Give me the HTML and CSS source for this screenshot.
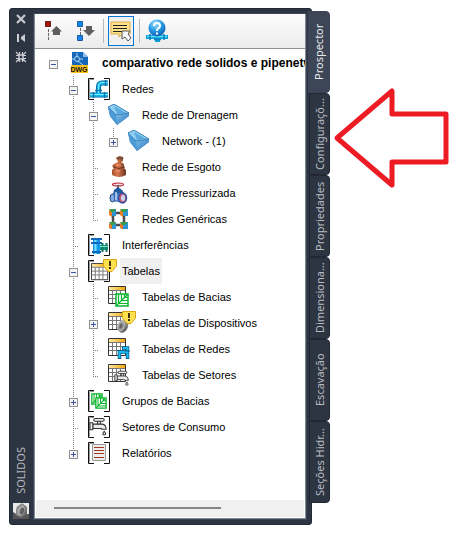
FILE: index.html
```html
<!DOCTYPE html>
<html lang="pt-BR">
<head>
    <meta charset="UTF-8">
    <meta name="viewport" content="width=device-width, initial-scale=1">
    <title>SOLIDOS</title>
    <link rel="stylesheet" href="styles.css">
</head>
<body>
    <!-- shared tree icons -->
    <svg class="symbols" width="0" height="0" aria-hidden="true">
        <defs>
            <linearGradient id="gem-light" x1="0" y1="0" x2="1" y2="1">
                <stop offset="0" stop-color="#7fc0ea"/>
                <stop offset="1" stop-color="#2a75bb"/>
            </linearGradient>
            <linearGradient id="gold" x1="0" y1="0" x2="1" y2="0">
                <stop offset="0" stop-color="#ffe9a0"/>
                <stop offset="1" stop-color="#f5a80c"/>
            </linearGradient>
            <linearGradient id="clay" x1="0" y1="0" x2="1" y2="0">
                <stop offset="0" stop-color="#a5502c"/>
                <stop offset=".4" stop-color="#d9774a"/>
                <stop offset="1" stop-color="#6b3423"/>
            </linearGradient>
            <radialGradient id="globe" cx=".4" cy=".25" r=".8">
                <stop offset="0" stop-color="#9fe4ff"/>
                <stop offset=".5" stop-color="#2a9be6"/>
                <stop offset="1" stop-color="#0759ab"/>
            </radialGradient>
            <linearGradient id="steel" x1="0" y1="0" x2="1" y2="1">
                <stop offset="0" stop-color="#d5d5d5"/>
                <stop offset=".5" stop-color="#8a8a8a"/>
                <stop offset="1" stop-color="#4c4c4c"/>
            </linearGradient>
        </defs>
        <symbol id="brackets" viewBox="0 0 22 22">
            <path d="M6 .5H.5V21.500H6M16 .5H21.500V21.500H16" fill="none" stroke="#111"/>
            <path d="M1.500 1.500V20.500M2 1.500H6" stroke="#999"/>
        </symbol>
        <symbol id="gem" viewBox="0 0 22 22">
            <path d="M0 3L6 0L21 9V12L9 21L2 12Z" fill="#2f7fc4"/>
            <path d="M0 3L6 0L21 9L8 11Z" fill="#8ecdf0"/>
            <path d="M6 2L9 10L18 9Z" fill="#5aa9de"/>
            <path d="M0 3L8 11L9 21L2 12Z" fill="#4d9bd6"/>
            <path d="M8 11L21 9V12L9 21Z" fill="url(#gem-light)"/>
            <path d="M0 3L6 0L21 9L8 11Z" fill="none" stroke="#2d77b5" stroke-width=".8"/>
        </symbol>
        <symbol id="table" viewBox="0 0 22 22">
            <path d="M.5 .5H17.500V17.500H.5Z" fill="#fff" stroke="#333"/>
            <path d="M1 1H17V4H1Z" fill="url(#gold)"/>
            <path d="M1 4.500H17M1 8.500H17M1 12.500H17M4.500 5V17M8.500 5V17M12.500 5V17" stroke="#777"/>
        </symbol>
        <symbol id="warning" viewBox="0 0 14 14">
            <path d="M.5 .5H13.500V7L9 12.500H5L.5 7Z" fill="#ffe14f" stroke="#d9a516"/>
            <path d="M6 2H8V7H6ZM6 8H8V10H6Z" fill="#3e3212"/>
        </symbol>
        <symbol id="faucet" viewBox="0 0 20 20">
            <g fill="#ececec" stroke="#333" stroke-width="1.1">
                <path d="M9 4H12V8H9Z"/>
                <rect x="5" y="1.500" width="11" height="3" rx="1.500"/>
                <path d="M4 7.500H14Q18 8 18 13H13.500Q14 12 12 12H4Z"/>
                <path d="M1 6H4V13.500H1Z"/>
                <path d="M16 15Q19 19 16 19Q13 19 16 15Z"/>
            </g>
        </symbol>
        <symbol id="basin" viewBox="0 0 14 14">
            <path d="M1 1H13V13H1Z" fill="#fff" stroke="#0bb52b" stroke-width="1.500"/>
            <path d="M3.500 1V10.500H13M6.500 1V7.500H13M9.500 1V4.500H13M1 13L12 2" fill="none" stroke="#0bb52b" stroke-width="1.200"/>
        </symbol>
    </svg>

    <main class="window">
        <section class="palette" aria-label="SOLIDOS">
            <header class="title-bar">
                <button class="title-button" aria-label="Fechar">
                    <svg width="10" height="10" viewBox="0 0 10 10"><path d="M1 1L9 9M9 1L1 9" stroke="#c8cbd0" stroke-width="2.200"/></svg>
                </button>
                <button class="title-button" aria-label="Ocultar automaticamente">
                    <svg width="10" height="10" viewBox="0 0 10 10"><path d="M1 1H3V9H1ZM9 1V9L5 6V4Z" fill="#c8cbd0"/></svg>
                </button>
                <button class="title-button" aria-label="Propriedades da paleta">
                    <svg width="10" height="10" viewBox="0 0 10 10">
                        <path d="M3.500 0V3M6.500 0V3M3.500 7V10M6.500 7V10M0 3.500H3M0 6.500H3M7 3.500H10M7 6.500H10M0 0L3 3M10 0L7 3M0 10L3 7M10 10L7 7" stroke="#c8cbd0" stroke-width="1.200"/>
                        <rect x="3" y="3" width="4" height="4" fill="none" stroke="#c8cbd0" stroke-width="1.500"/>
                    </svg>
                </button>
                <h1 class="title">SOLIDOS</h1>
                <svg width="16" height="16" viewBox="0 0 16 16" aria-hidden="true">
                    <path d="M0 0H16V16H0Z" fill="#e9e9e9"/>
                    <path d="M0 9L5 12L16 11V16H0Z" fill="#555"/>
                    <path d="M3 4L9 0L14 4V11L9 15L3 12Z" fill="url(#steel)"/>
                    <ellipse cx="8" cy="7.500" rx="4" ry="6" transform="rotate(20 8 7.500)" fill="#a9a9a9" stroke="#777"/>
                    <ellipse cx="9" cy="8" rx="2" ry="3.500" transform="rotate(20 9 8)" fill="#606060"/>
                </svg>
            </header>

            <div class="content">
                <div class="toolbar" role="toolbar">
                    <button class="tool" aria-label="Mover para cima">
                        <svg width="18" height="22" viewBox="0 0 18 22">
                            <path d="M.5 1.500H5.500V6.500H.5Z" fill="#b00d0d" stroke="#5d2020"/>
                            <path d="M3.500 9V21" stroke="#666" stroke-dasharray="3 1"/>
                            <path d="M11.500 6L17 11.500H15V15H8V11.500H6Z" fill="#5e5e5e"/>
                        </svg>
                    </button>
                    <button class="tool" aria-label="Mover para baixo">
                        <svg width="18" height="22" viewBox="0 0 18 22">
                            <path d="M.5 1.500H5.500V6.500H.5ZM.5 15.500H5.500V20.500H.5Z" fill="#1387f3" stroke="#1b5c9c"/>
                            <path d="M3.500 8V15" stroke="#666" stroke-dasharray="3 1"/>
                            <path d="M9 6H15V10H18L12 16L6 10H9Z" fill="#5e5e5e"/>
                        </svg>
                    </button>
                    <span class="separator"></span>
                    <button class="tool selected" aria-label="Dicas" aria-pressed="true">
                        <svg width="22" height="22" viewBox="0 0 22 22">
                            <path d="M1 2H20V14H13L9 17V14H1Z" fill="#ffe08a" stroke="#d9ad4e"/>
                            <path d="M3 5.500H17M3 8.500H17M3 11.500H17" stroke="#222" stroke-width="1.200"/>
                            <path d="M12 11H20L18 14L21 18L18 21L15 17L12 19Z" fill="#fff" stroke="#555"/>
                        </svg>
                    </button>
                    <span class="separator"></span>
                    <button class="tool" aria-label="Ajuda">
                        <svg width="22" height="22" viewBox="0 0 22 22">
                            <path d="M0 15H22V19H14V22H9V19H0Z" fill="#0b9fd9"/>
                            <path d="M1 16.500H21" stroke="#63e5ff" stroke-width="1.500"/>
                            <path d="M4 14V20M18 14V20M8 19.500H15" stroke="#087ebc" stroke-width="1.500"/>
                            <circle cx="11" cy="8" r="8.500" fill="url(#globe)"/>
                            <path d="M8 6Q8 3 11 3T14 6Q14 7.500 12 8.500Q11 9 11 11M11 12.500V14.500" fill="none" stroke="#fff" stroke-width="2"/>
                        </svg>
                    </button>
                </div>

                <ul class="tree" role="tree">
                    <li class="root" role="treeitem" aria-expanded="true">
                        <div class="row">
                            <button class="toggle" aria-label="Recolher"></button>
                            <span class="icon file">
                                <svg width="18" height="22" viewBox="0 0 18 22">
                                    <path d="M1 0H12L17 5V16H1Z" fill="#1767b8"/>
                                    <path d="M12 0L17 5H12Z" fill="#8bbdf0"/>
                                    <circle cx="6" cy="7" r="2.500" fill="none" stroke="#b7d8f5"/>
                                    <path d="M6 1V5M1 7H3M9 7H12M7 9L12 13" stroke="#b7d8f5"/>
                                    <path d="M0 13H17V21H0Z" fill="#fdc215"/>
                                    <text class="file-type" x="8" y="20">DWG</text>
                                </svg>
                            </span>
                            <span class="label">comparativo rede solidos e pipenetw</span>
                        </div>
                        <ul class="branch" role="group">
                            <li role="treeitem" aria-expanded="true">
                                <div class="row">
                                    <button class="toggle" aria-label="Recolher"></button>
                                    <span class="icon">
                                        <svg width="22" height="22" viewBox="0 0 22 22">
                                            <use href="#brackets"/>
                                            <path d="M2 17H20M10.500 16V9Q10.500 5 14 5H20" fill="none" stroke="#075b8e" stroke-width="5"/>
                                            <path d="M2 17H20M10.500 16V9Q10.500 5 14 5H20" fill="none" stroke="#14b8f0" stroke-width="3.500"/>
                                            <path d="M2 16.500H20M10.500 15V9Q10.500 4.500 14 4.500H20" fill="none" stroke="#7aefff"/>
                                            <path d="M5.500 14V20M16.500 14V20M17.500 2V8M7 12.500H14" stroke="#0875b0" stroke-width="1.500"/>
                                        </svg>
                                    </span>
                                    <span class="label">Redes</span>
                                </div>
                                <ul class="branch" role="group">
                                    <li role="treeitem" aria-expanded="true">
                                        <div class="row">
                                            <button class="toggle" aria-label="Recolher"></button>
                                            <span class="icon"><svg width="22" height="22"><use href="#gem"/></svg></span>
                                            <span class="label">Rede de Drenagem</span>
                                        </div>
                                        <ul class="branch" role="group">
                                            <li role="treeitem" aria-expanded="false">
                                                <div class="row">
                                                    <button class="toggle plus" aria-label="Expandir"></button>
                                                    <span class="icon"><svg width="22" height="22"><use href="#gem"/></svg></span>
                                                    <span class="label">Network - (1)</span>
                                                </div>
                                            </li>
                                        </ul>
                                    </li>
                                    <li role="treeitem">
                                        <div class="row">
                                            <span class="leaf"></span>
                                            <span class="icon">
                                                <svg width="22" height="22" viewBox="0 0 22 22">
                                                    <path d="M4 10L6 8L10 6L8 2L11 0L15 1V5L13 6L16 8V12L18 14V19Q11 23 4 19V14L6 12Z" fill="url(#clay)"/>
                                                    <ellipse cx="12" cy="2" rx="3.500" ry="1.500" fill="#78503e"/>
                                                    <path d="M5 11Q11 14 17 11" fill="none" stroke="#693421"/>
                                                    <path d="M8 9H13M7 15H12" stroke="#f0a276"/>
                                                </svg>
                                            </span>
                                            <span class="label">Rede de Esgoto</span>
                                        </div>
                                    </li>
                                    <li role="treeitem">
                                        <div class="row">
                                            <span class="leaf"></span>
                                            <span class="icon">
                                                <svg width="22" height="22" viewBox="0 0 22 22">
                                                    <ellipse cx="10" cy="2.500" rx="5.500" ry="1.500" fill="#f4dada" stroke="#bd2734" stroke-width="1.200"/>
                                                    <path d="M9 3H11V10H9Z" fill="#666"/>
                                                    <path d="M6 8L10 5L14 8L16 11L11 14L5 12Z" fill="#235b9f"/>
                                                    <path d="M3 12L16 11V21L3 19Z" fill="#5a86cb"/>
                                                    <ellipse cx="4.500" cy="16" rx="2.500" ry="4" fill="#7fa9e4" stroke="#29477e"/>
                                                    <ellipse cx="14.500" cy="16" rx="4" ry="5" fill="#c25a70" stroke="#304fa5" stroke-width="1.500"/>
                                                    <ellipse cx="15" cy="16" rx="2" ry="3" fill="#c9d9f4"/>
                                                    <path d="M8 10V18" stroke="#b9d8fa" stroke-width="1.500"/>
                                                </svg>
                                            </span>
                                            <span class="label">Rede Pressurizada</span>
                                        </div>
                                    </li>
                                    <li role="treeitem">
                                        <div class="row">
                                            <span class="leaf"></span>
                                            <span class="icon">
                                                <svg width="22" height="22" viewBox="0 0 22 22">
                                                    <path d="M5 5H16V17H5Z" fill="none" stroke="#4c4c4c" stroke-width="2.500"/>
                                                    <path d="M2 1H8V8H2ZM13 1H20V8H13ZM2 14H8V21H2ZM13 14H20V21H13Z" fill="#2b95d6"/>
                                                    <path d="M1 2L4 4V9L1 7ZM12 2L15 4V9L12 7ZM1 15L4 17V21L1 20ZM12 15L15 17V21L12 20Z" fill="#ef7b20"/>
                                                    <path d="M1 1H8L6 4H3ZM12 1H20L17 4H14ZM1 14H8L6 17H3ZM12 14H20L17 17H14Z" fill="#3c9e4b"/>
                                                </svg>
                                            </span>
                                            <span class="label">Redes Genéricas</span>
                                        </div>
                                    </li>
                                </ul>
                            </li>
                            <li role="treeitem">
                                <div class="row">
                                    <span class="leaf"></span>
                                    <span class="icon">
                                        <svg width="22" height="22" viewBox="0 0 22 22">
                                            <use href="#brackets"/>
                                            <path d="M5 4H12V20H5Z" fill="#109be8"/>
                                            <path d="M7.500 4V20" stroke="#7ce4ff" stroke-width="2"/>
                                            <path d="M3 5H14M3 9H14M4 18H13" stroke="#1267bd" stroke-width="2"/>
                                            <path d="M12 11H20V16H12Z" fill="#16a08a"/>
                                            <path d="M14.500 9V18M18.500 9V18" stroke="#0d7463" stroke-width="2"/>
                                            <path d="M12 12.500H20" stroke="#7ee4c4"/>
                                        </svg>
                                    </span>
                                    <span class="label">Interferências</span>
                                </div>
                            </li>
                            <li role="treeitem" aria-expanded="true" aria-selected="true">
                                <div class="row">
                                    <button class="toggle" aria-label="Recolher"></button>
                                    <span class="icon">
                                        <svg width="22" height="22" viewBox="0 0 22 22">
                                            <use href="#brackets"/>
                                            <use href="#table" x="3" y="3" width="21" height="21"/>
                                            <use href="#warning" x="15" y="-1" width="14" height="14"/>
                                        </svg>
                                    </span>
                                    <span class="label current">Tabelas</span>
                                </div>
                                <ul class="branch" role="group">
                                    <li role="treeitem">
                                        <div class="row">
                                            <span class="leaf"></span>
                                            <span class="icon">
                                                <svg width="22" height="22" viewBox="0 0 22 22">
                                                    <use href="#table" width="22" height="22"/>
                                                    <use href="#basin" x="7" y="7" width="14" height="14"/>
                                                </svg>
                                            </span>
                                            <span class="label">Tabelas de Bacias</span>
                                        </div>
                                    </li>
                                    <li role="treeitem" aria-expanded="false">
                                        <div class="row">
                                            <button class="toggle plus" aria-label="Expandir"></button>
                                            <span class="icon">
                                                <svg width="22" height="22" viewBox="0 0 22 22">
                                                    <use href="#table" width="22" height="22"/>
                                                    <ellipse cx="15" cy="14" rx="5" ry="7" transform="rotate(20 15 14)" fill="url(#steel)"/>
                                                    <ellipse cx="13" cy="14" rx="3" ry="5" transform="rotate(20 13 14)" fill="#999" stroke="#bbb"/>
                                                    <ellipse cx="13" cy="14" rx="1.500" ry="2.500" transform="rotate(20 13 14)" fill="#666"/>
                                                    <use href="#warning" x="14" y="-1" width="14" height="14"/>
                                                </svg>
                                            </span>
                                            <span class="label">Tabelas de Dispositivos</span>
                                        </div>
                                    </li>
                                    <li role="treeitem">
                                        <div class="row">
                                            <span class="leaf"></span>
                                            <span class="icon">
                                                <svg width="22" height="22" viewBox="0 0 22 22">
                                                    <use href="#table" width="22" height="22"/>
                                                    <path d="M11.500 21V14H19.500M19.500 21V10H15" fill="none" stroke="#075e8f" stroke-width="3.500"/>
                                                    <path d="M11.500 20V14H19.500M19.500 20V10H15" fill="none" stroke="#18b9ef" stroke-width="2"/>
                                                    <path d="M9 12.500H14M17 13H22M14.500 8V12" stroke="#075e8f"/>
                                                </svg>
                                            </span>
                                            <span class="label">Tabelas de Redes</span>
                                        </div>
                                    </li>
                                    <li role="treeitem">
                                        <div class="row">
                                            <span class="leaf"></span>
                                            <span class="icon">
                                                <svg width="22" height="22" viewBox="0 0 22 22">
                                                    <use href="#table" width="22" height="22"/>
                                                    <use href="#faucet" x="6" y="6" width="16" height="16"/>
                                                </svg>
                                            </span>
                                            <span class="label">Tabelas de Setores</span>
                                        </div>
                                    </li>
                                </ul>
                            </li>
                            <li role="treeitem" aria-expanded="false">
                                <div class="row">
                                    <button class="toggle plus" aria-label="Expandir"></button>
                                    <span class="icon">
                                        <svg width="22" height="22" viewBox="0 0 22 22">
                                            <use href="#brackets"/>
                                            <use href="#basin" x="3" y="3" width="12" height="12"/>
                                            <use href="#basin" x="7" y="7" width="12" height="12"/>
                                        </svg>
                                    </span>
                                    <span class="label">Grupos de Bacias</span>
                                </div>
                            </li>
                            <li role="treeitem">
                                <div class="row">
                                    <span class="leaf"></span>
                                    <span class="icon">
                                        <svg width="22" height="22" viewBox="0 0 22 22">
                                            <use href="#brackets"/>
                                            <use href="#faucet" x="1" y="1" width="19" height="19"/>
                                        </svg>
                                    </span>
                                    <span class="label">Setores de Consumo</span>
                                </div>
                            </li>
                            <li role="treeitem" aria-expanded="false">
                                <div class="row">
                                    <button class="toggle plus" aria-label="Expandir"></button>
                                    <span class="icon">
                                        <svg width="22" height="22" viewBox="0 0 22 22">
                                            <use href="#brackets"/>
                                            <path d="M4.500 2.500H17.500V18.500H4.500Z" fill="#ececec" stroke="#999"/>
                                            <path d="M6 5.500H16M6 8.500H16M6 11.500H16M6 15.500H16" stroke="#a3371c"/>
                                        </svg>
                                    </span>
                                    <span class="label">Relatórios</span>
                                </div>
                            </li>
                        </ul>
                    </li>
                </ul>

                <div class="scrollbar"><div class="thumb"></div></div>
            </div>
        </section>

        <nav class="tabs" role="tablist">
            <button class="tab active" role="tab" aria-selected="true">Prospector</button>
            <button class="tab" role="tab">Configuraçõ...</button>
            <button class="tab" role="tab">Propriedades</button>
            <button class="tab" role="tab">Dimensiona...</button>
            <button class="tab" role="tab">Escavação</button>
            <button class="tab" role="tab">Seções Hidr...</button>
        </nav>
    </main>

    <svg class="arrow" width="118" height="104" viewBox="0 0 118 104" aria-hidden="true">
        <path d="M5 52L60 5V28H114V76H60V99Z" fill="none" stroke="#ed1c24" stroke-width="5" stroke-linejoin="round"/>
    </svg>
</body>
</html>
```

FILE: styles.css
```css
* {
    box-sizing: border-box;
}

body {
    margin: 0;
    min-height: 100vh;
    padding: 8px 11px 14px 9px;
    display: flex;
    gap: 2px;
    background-color: #fff;
    font-family: "Liberation Sans", Arial, sans-serif;
    font-size: 11px;
    color: #000;
}

button {
    border: none;
    padding: 0;
    background: none;
    font: inherit;
    color: inherit;
}

ul {
    list-style: none;
    margin: 0;
    padding: 0;
}

svg {
    display: block;
    overflow: visible;
}

.symbols {
    position: absolute;
}

.window {
    flex: 1;
    min-width: 0;
    display: flex;
}

.palette {
    flex: 1;
    min-width: 0;
    display: flex;
    padding: 5px 5px 5px 0;
    border: 1px solid #222a36;
    border-radius: 3px;
    background-color: #2e3542;
}

/* left title strip */
.title-bar {
    width: 22px;
    display: flex;
    flex-direction: column;
    align-items: center;
    gap: 9px;
}

.title-button {
    display: block;
}

.title {
    margin: auto 0 0;
    writing-mode: vertical-rl;
    transform: rotate(180deg);
    font-family: "Noto Sans", sans-serif;
    font-size: 11px;
    font-weight: 400;
    line-height: 16px;
    color: #b4b8be;
}

.content {
    flex: 1;
    min-width: 0;
    display: flex;
    flex-direction: column;
    margin-left: 2px;
    border: 1px solid #7d8893;
    border-top: none;
    outline: 1px solid #3d4656;
    background-color: #fff;
}

.toolbar {
    height: 35px;
    padding: 2px 10px;
    display: flex;
    align-items: center;
    border-bottom: 1px solid #8c9399;
    background: linear-gradient(#fdfdfd, #ebebeb);
}

.tool {
    height: 30px;
    padding: 4px 0;
    margin-right: 14px;
}

.separator {
    width: 1px;
    height: 24px;
    margin: 0 6px 0 -6px;
    background-color: #b9b9b9;
}

.tool.selected {
    width: 26px;
    padding: 3px 1px;
    margin-right: 11px;
    margin-left: -2px;
    border: 1px solid #0078d7;
    background-color: #f0f0f0;
}

/* tree */
.tree {
    flex: 1;
    padding: 1px 0 22px 9px;
    overflow: hidden;
    white-space: nowrap;
}

.branch {
    padding-left: 20px;
}

.branch > li {
    background: repeating-linear-gradient(#808080 0 1px, transparent 1px 2px) 9px 0 / 1px 100% no-repeat;
}

.branch > li:last-child {
    background-size: 1px 15px;
}

.row {
    display: flex;
    align-items: center;
    height: 26px;
}

.toggle {
    flex: none;
    width: 9px;
    height: 9px;
    margin: 2px 6px 0 5px;
    border: 1px solid #919191;
    background: linear-gradient(#3b54a8, #3b54a8) center / 5px 1px no-repeat, #f5f5f5;
}

.toggle.plus {
    background:
        linear-gradient(#3b54a8, #3b54a8) center / 5px 1px no-repeat,
        linear-gradient(#3b54a8, #3b54a8) center / 1px 5px no-repeat,
        #f5f5f5;
}

.leaf {
    flex: none;
    width: 20px;
    height: 1px;
    margin-top: 2px;
    background: repeating-linear-gradient(90deg, #808080 0 1px, transparent 1px 2px) 9px 0 / 6px 1px no-repeat;
}

.icon {
    flex: none;
    width: 30px;
    display: flex;
    justify-content: center;
}

.file-type {
    font-size: 7px;
    font-weight: 700;
    text-anchor: middle;
    fill: #111;
}

.label {
    margin-left: 6px;
    padding: 0 2px;
    line-height: 26px;
}

.label.current {
    background-color: #f0f0f0;
}

.root > .row .icon {
    width: 32px;
}

.root > .row > .label {
    margin-left: 4px;
    padding-right: 0;
    font-size: 12px;
    font-weight: 700;
}

.scrollbar {
    height: 17px;
    margin: 0 1px 1px;
    padding: 7px 18px;
    background-color: #f0f0f0;
}

.thumb {
    width: 72%;
    height: 2px;
    background-color: #858585;
}

/* side tabs */
.tabs {
    flex: none;
    margin-left: -4px;
    padding-top: 3px;
    display: flex;
    flex-direction: column;
    align-items: flex-end;
}

.tab {
    width: 21px;
    height: 82px;
    border: 1px solid #222833;
    border-radius: 4px 0 0 4px;
    background-color: #2e3542;
    writing-mode: vertical-rl;
    transform: rotate(180deg);
    font-family: "Noto Sans", sans-serif;
    font-size: 11px;
    line-height: 16px;
    color: #b9bdc3;
}

.tab.active {
    width: 22px;
    border-color: #3d4656;
    background-color: #3d4656;
    color: #e8eaed;
}

.arrow {
    flex: none;
    margin-top: 78px;
}
```
